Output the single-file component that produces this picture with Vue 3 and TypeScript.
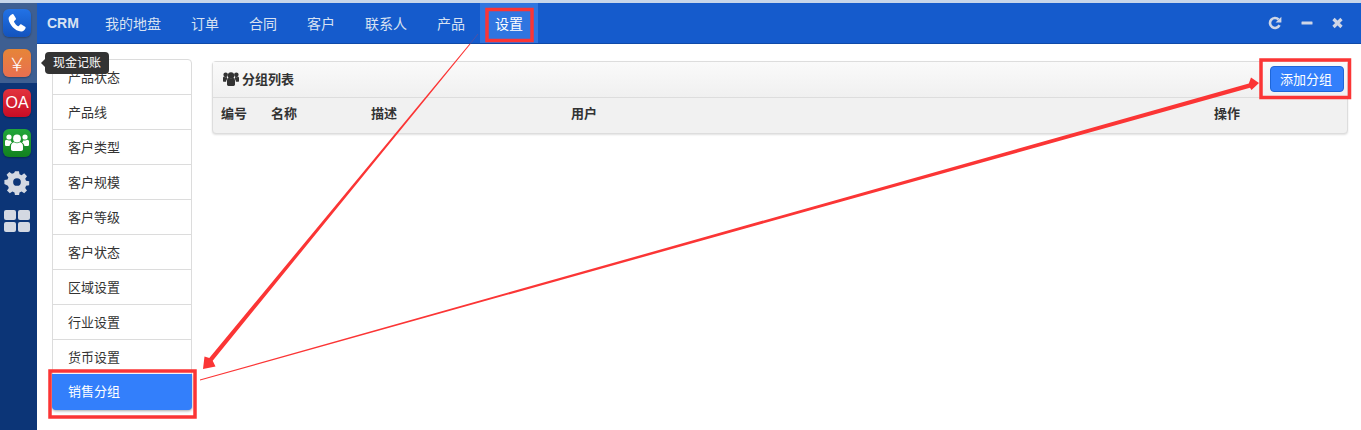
<template>
  <div class="app">
    <aside class="dock">
      <div class="dock__active">
        <div class="tile tile--phone">
          <svg width="20" height="20" viewBox="0 0 24 24"><path fill="#fff" d="M6.200 1.500c.7-.4 1.500-.2 1.900.5l2.500 4.300c.4.600.2 1.300-.3 1.800L8.700 9.500c-.4.400-.4.800-.2 1.300.9 1.800 2.500 3.600 4.300 4.800.4.300.9.300 1.300-.1l1.500-1.500c.5-.5 1.200-.6 1.800-.2l4.300 2.600c.7.400.9 1.200.5 1.900-1 1.900-2.800 4.200-5.300 3.900C9.500 21.400 2.700 14 1.900 7.100 1.600 4.700 4.100 2.600 6.200 1.500z"/></svg>
        </div>
        <div class="tile tile--yuan">￥</div>
      </div>
      <div class="tile tile--oa">OA</div>
      <div class="tile tile--team">
        <svg width="24" height="20" viewBox="0 0 24 20"><g fill="#fff"><circle cx="12" cy="5.500" r="3.900"/><circle cx="4" cy="4" r="2.600"/><circle cx="20" cy="4" r="2.600"/><path d="M6 13c0-2.600 2-3.800 3-3.800 1 .7 2 1.100 3 1.100s2-.4 3-1.100c1 0 3 1.200 3 3.800v3.300c0 1-1 1.700-2 1.700H8c-1 0-2-.7-2-1.700z"/><path d="M0 8.500c0-1 .7-1.800 1.800-1.800.7.500 1.400.8 2.200.8s1 0 1.500-.2c.2 1 .8 1.700 1.500 2.300-1.300.7-2.200 1.900-2.400 3.400H1.500C.700 13 0 12.400 0 11.700zM24 8.500c0-1-.7-1.800-1.800-1.800-.7.500-1.400.8-2.200.8s-1 0-1.500-.2c-.2 1-.8 1.700-1.500 2.300 1.300.7 2.200 1.900 2.400 3.400h3.100c.8 0 1.500-.6 1.500-1.300z"/></g></svg>
      </div>
      <div class="dock__icon">
        <svg width="26" height="26" viewBox="0 0 26 26"><path fill="#d3d8e2" fill-rule="evenodd" d="M10.800 1h4.400l.6 3.400 2.300 1 2.900-2 3.100 3.100-2 2.900 1 2.300 3.400.6v4.400l-3.400.6-1 2.300 2 2.900-3.100 3.100-2.900-2-2.300 1-.6 3.400h-4.400l-.6-3.400-2.300-1-2.900 2-3.100-3.100 2-2.900-1-2.300L-1 15.200v-4.400l3.400-.6 1-2.300-2-2.900 3.100-3.100 2.900 2 2.300-1zM13 8.700a4.300 4.300 0 1 0 0 8.600 4.300 4.300 0 0 0 0-8.600z" transform="translate(1.300 1.300) scale(.9)"/></svg>
      </div>
      <div class="dock__grid">
        <span v-for="n in 4" :key="n"></span>
      </div>
    </aside>

    <div class="main">
      <nav class="topbar">
        <span class="topbar__brand">CRM</span>
        <a
          v-for="item in navItems"
          :key="item"
          class="topbar__item"
          :class="{ 'topbar__item--active': item === '设置' }"
        >{{ item }}</a>
        <div class="topbar__tools">
          <svg width="14" height="14" viewBox="0 0 14 14"><path fill="none" stroke="#cfd6e6" stroke-width="2.600" d="M11.500 9.200A5 5 0 1 1 10.600 3.500"/><path fill="#cfd6e6" d="M13.400 .8v5.800H7.600z"/></svg>
          <svg width="12" height="14" viewBox="0 0 12 14"><rect x="0.500" y="5.500" width="11" height="3" rx="0.500" fill="#cfd6e6"/></svg>
          <svg width="11" height="14" viewBox="0 0 11 14"><path stroke="#cfd6e6" stroke-width="3.200" d="M1.500 3l8 8M9.500 3l-8 8"/></svg>
        </div>
      </nav>

      <div class="content">
        <ul class="menu">
          <li
            v-for="entry in menuItems"
            :key="entry"
            class="menu__item"
            :class="{ 'menu__item--active': entry === '销售分组' }"
          >{{ entry }}</li>
        </ul>

        <section class="panel">
          <header class="panel__head">
            <svg width="16" height="14" viewBox="0 0 24 20" preserveAspectRatio="none"><g fill="#333"><circle cx="12" cy="5" r="4.800"/><circle cx="4" cy="4" r="3.400"/><circle cx="20" cy="4" r="3.400"/><path d="M6 12c0-2.600 2-3.800 3-3.800 1 .7 2 1.100 3 1.100s2-.4 3-1.100c1 0 3 1.200 3 3.800v6c0 1-1 2-2 2H8c-1 0-2-1-2-2z"/><path d="M0 8.500c0-1 .7-1.800 1.800-1.800.7.500 1.400.8 2.200.8s1 0 1.500-.2c.2 1 .8 1.700 1.500 2.300-1.300.7-2.200 1.900-2.400 4.400H1.500C.700 14 0 13.400 0 12.700zM24 8.500c0-1-.7-1.800-1.800-1.800-.7.500-1.400.8-2.200.8s-1 0-1.500-.2c-.2 1-.8 1.700-1.500 2.300 1.300.7 2.200 1.900 2.400 4.400h3.100c.8 0 1.500-.6 1.500-1.300z"/></g></svg>
            <span class="panel__title">分组列表</span>
            <button class="panel__add">添加分组</button>
          </header>
          <div class="panel__cols">
            <span>编号</span>
            <span>名称</span>
            <span>描述</span>
            <span>用户</span>
            <span>操作</span>
          </div>
        </section>
      </div>
    </div>

    <div class="tip">现金记账</div>

    <svg class="marks" width="1361" height="430" viewBox="0 0 1361 430">
      <g fill="none" stroke="#fb3535" stroke-width="3.500">
        <rect x="487" y="9.500" width="45" height="31" />
        <rect x="50" y="371" width="145" height="46" />
        <rect x="1261" y="60" width="88.500" height="37.500" />
      </g>
      <line x1="470" y1="44" x2="478" y2="34" stroke="#fb3535" stroke-width="1" opacity="0.25" />
      <g fill="#fb3535">
        <polygon points="203,369 204.500,356.500 209.300,357.900 469.600,43.700 470.400,44.300 212.700,360.700 215.500,366.500" />
        <polygon points="1259,83 1251,77.500 1248.800,83.600 199.900,379.500 200.100,380.500 1250,87.800 1251.500,90" />
      </g>
    </svg>
  </div>
</template>

<script setup lang="ts">
const navItems = ['我的地盘', '订单', '合同', '客户', '联系人', '产品', '设置'];
const menuItems = [
  '产品状态',
  '产品线',
  '客户类型',
  '客户规模',
  '客户等级',
  '客户状态',
  '区域设置',
  '行业设置',
  '货币设置',
  '销售分组',
];
</script>

<style>
body {
  margin: 0;
  background: #fff;
}
</style>

<style scoped>
.app {
  position: relative;
  display: flex;
  width: 1361px;
  height: 430px;
  overflow: hidden;
  padding-top: 3px;
  box-sizing: border-box;
  background: linear-gradient(#c7d6ea 3px, #fff 3px);
  font-family: 'Liberation Sans', 'Noto Sans CJK SC', sans-serif;
  font-size: 13px;
  color: #333;
}

.dock {
  flex: none;
  display: flex;
  flex-direction: column;
  align-items: center;
  width: 37px;
  padding-right: 3px;
  box-sizing: border-box;
  background: #0c3577;
}

.dock__active {
  display: flex;
  flex-direction: column;
  align-items: center;
  gap: 12px;
  align-self: stretch;
  width: 37px;
  height: 80px;
  padding: 6px 3px 0 0;
  box-sizing: border-box;
  background: #3e5f92;
}

.tile {
  flex: none;
  display: flex;
  align-items: center;
  justify-content: center;
  width: 28px;
  height: 28px;
  border-radius: 6px;
  color: #fff;
  box-shadow: 0 1px 2px rgba(0, 0, 0, 0.3);
}

.tile--phone {
  background: linear-gradient(#2272e6, #1353bd);
}

.tile--yuan {
  background: linear-gradient(#e68538, #e86f50);
  font-size: 18px;
  font-weight: 300;
}

.tile--oa {
  margin-top: 6px;
  background: linear-gradient(#e2333d, #c80c25);
  font-size: 16px;
}

.tile--team {
  margin-top: 12px;
  background: linear-gradient(#22a63a, #12811f);
}

.dock__icon {
  display: flex;
  margin-top: 12px;
}

.dock__grid {
  display: grid;
  grid-template-columns: 12px 12px;
  gap: 2px;
  margin-top: 15px;
}

.dock__grid span {
  height: 10px;
  border-radius: 2px;
  background: #d3d8e2;
}

.main {
  flex: 1;
  min-width: 0;
}

.topbar {
  display: flex;
  align-items: center;
  height: 40px;
  padding-left: 10px;
  background: #155bcc;
  border-bottom: 1px solid #0f4aa8;
  color: #d8e2f2;
  font-size: 14px;
}

.topbar__brand {
  margin-right: 11px;
  font-weight: bold;
}

.topbar__item {
  display: flex;
  align-items: center;
  height: 100%;
  padding: 0 15px;
}

.topbar__item--active {
  background: #2f75e0;
  color: #fff;
}

.topbar__tools {
  display: flex;
  align-items: center;
  gap: 19px;
  margin-left: auto;
  padding-right: 18px;
}

.content {
  display: flex;
  align-items: flex-start;
  gap: 20px;
  padding: 15px 13px 0 15px;
}

.menu {
  flex: none;
  width: 140px;
  margin: 0;
  padding: 0;
  list-style: none;
  box-sizing: border-box;
  background: #fff;
  border: 1px solid #dcdcdc;
  border-radius: 4px;
}

.menu__item {
  height: 35px;
  line-height: 35px;
  padding-left: 15px;
  box-sizing: border-box;
  border-bottom: 1px solid #dcdcdc;
}

.menu__item--active {
  position: relative;
  height: 36px;
  line-height: 36px;
  margin: -1px -1px -1px;
  padding-left: 16px;
  border: 0;
  border-radius: 0 0 4px 4px;
  background: #337ffb;
  color: #fff;
  box-shadow: 0 1px 3px rgba(0, 0, 0, 0.35);
}

.panel {
  flex: 1;
  margin-top: 2px;
  border: 1px solid #dddddd;
  border-radius: 4px;
  background: #f1f1f1;
  box-shadow: 0 1px 2px rgba(0, 0, 0, 0.12);
}

.panel__head {
  display: flex;
  align-items: center;
  gap: 3px;
  height: 36px;
  padding: 0 3px 2px 10px;
  box-sizing: border-box;
  border-bottom: 1px solid #dddddd;
  background: linear-gradient(#fafafa, #f0f0f0);
}

.panel__title {
  font-weight: bold;
}

.panel__add {
  margin-left: auto;
  width: 74px;
  height: 26px;
  padding: 0 2px 0 0;
  border: 1px solid #1f66d8;
  border-radius: 4px;
  background: #337ffb;
  color: #fff;
  font: inherit;
}

.panel__cols {
  display: grid;
  grid-template-columns: 50px 100px 200px 643px 1fr;
  align-items: center;
  height: 35px;
  padding: 0 0 6px 8px;
  box-sizing: border-box;
  font-weight: bold;
}

.tip {
  position: absolute;
  left: 45px;
  top: 52px;
  padding: 0 8px;
  height: 22px;
  line-height: 22px;
  border-radius: 4px;
  background: #333;
  color: #fff;
  font-size: 12px;
}

.tip::before {
  content: '';
  position: absolute;
  left: -4px;
  top: 7px;
  border: 4px solid transparent;
  border-left: 0;
  border-right-color: #333;
}

.marks {
  position: absolute;
  left: 0;
  top: 0;
  pointer-events: none;
}
</style>
